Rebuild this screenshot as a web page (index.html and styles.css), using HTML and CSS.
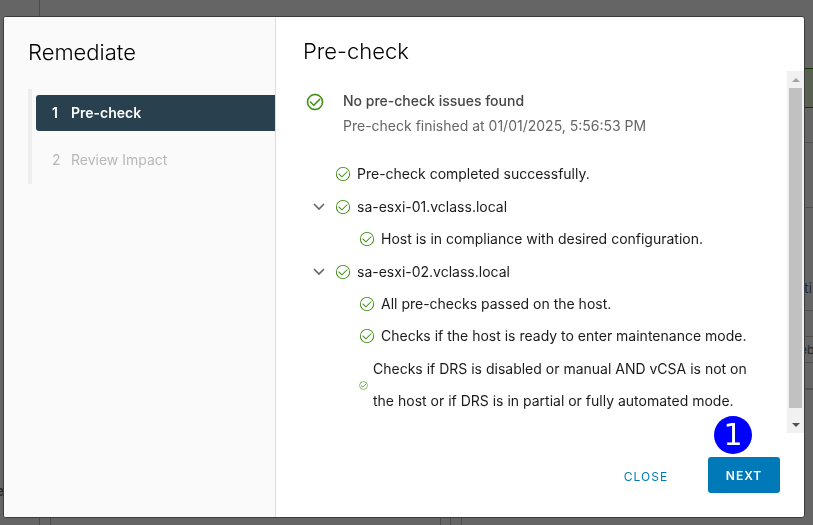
FILE: index.html
```html
<!DOCTYPE html>
<html lang="en">
<head>
<meta charset="utf-8">
<meta name="viewport" content="width=device-width, initial-scale=1">
<title>Remediate</title>
<link rel="stylesheet" href="styles.css">
</head>
<body>
<svg class="defs" aria-hidden="true">
  <symbol id="check" viewBox="0 0 36 36">
    <path d="M18 2a16 16 0 1 0 16 16A16 16 0 0 0 18 2Zm0 30a14 14 0 1 1 14-14 14 14 0 0 1-14 14Z"/>
    <path d="M28 12.1a1 1 0 0 0-1.41 0L15.49 23.15l-6-6A1 1 0 0 0 8 18.53L15.49 26 28 13.52a1 1 0 0 0 0-1.42Z"/>
  </symbol>
  <symbol id="chevron" viewBox="0 0 12 8">
    <path d="M1 1l5 5 5-5"/>
  </symbol>
</svg>

<div class="page" aria-hidden="true">
  <div class="page-nav"><span>e</span></div>
  <div class="page-content">
    <div class="panes">
      <div class="pane"></div>
      <div class="gutter"></div>
      <div class="pane pane-wide"></div>
    </div>
  </div>
  <div class="rail">
    <div class="rail-space"></div>
    <div class="rail-banner"></div>
    <div class="rail-row"></div>
    <div class="rail-row rail-tall"></div>
    <div class="rail-row rail-title">ti</div>
    <div class="rail-row rail-cell"></div>
    <div class="rail-row rail-cell">eb</div>
    <div class="rail-row rail-cell rail-last"></div>
  </div>
</div>

<div class="dialog" role="dialog" aria-modal="true" aria-labelledby="wizard-title">
  <aside class="sidebar">
    <h1 id="wizard-title">Remediate</h1>
    <ol class="steps">
      <li><button class="step active" type="button" aria-current="step"><span>1</span>Pre-check</button></li>
      <li><button class="step" type="button" disabled><span>2</span>Review Impact</button></li>
    </ol>
  </aside>

  <main class="main">
    <h2>Pre-check</h2>
    <div class="viewport">
      <div class="scroll-content">
        <div class="summary">
          <svg class="check-large"><use href="#check"/></svg>
          <div>
            <p class="summary-title">No pre-check issues found</p>
            <p class="summary-time">Pre-check finished at 01/01/2025, 5:56:53 PM</p>
          </div>
        </div>
        <ul class="tree">
          <li class="node"><svg class="check"><use href="#check"/></svg><span>Pre-check completed successfully.</span></li>
          <li>
            <div class="node parent"><button class="toggle" type="button" aria-label="Collapse sa-esxi-01"><svg><use href="#chevron"/></svg></button><svg class="check"><use href="#check"/></svg><span>sa-esxi-01.vclass.local</span></div>
            <ul class="children">
              <li class="node"><svg class="check"><use href="#check"/></svg><span>Host is in compliance with desired configuration.</span></li>
            </ul>
          </li>
          <li>
            <div class="node parent"><button class="toggle" type="button" aria-label="Collapse sa-esxi-02"><svg><use href="#chevron"/></svg></button><svg class="check"><use href="#check"/></svg><span>sa-esxi-02.vclass.local</span></div>
            <ul class="children">
              <li class="node"><svg class="check"><use href="#check"/></svg><span>All pre-checks passed on the host.</span></li>
              <li class="node"><svg class="check"><use href="#check"/></svg><span>Checks if the host is ready to enter maintenance mode.</span></li>
              <li class="node long"><svg class="check check-small"><use href="#check"/></svg><span>Checks if DRS is disabled or manual AND vCSA is not on<br>the host or if DRS is in partial or fully automated mode.</span></li>
            </ul>
          </li>
        </ul>
      </div>
      <div class="scrollbar" aria-hidden="true">
        <div class="arrow up"></div>
        <div class="thumb"></div>
        <div class="arrow down"></div>
      </div>
    </div>
    <footer class="actions">
      <button class="btn btn-link" type="button">CLOSE</button>
      <div class="next-wrap">
        <button class="btn btn-primary" type="button">NEXT</button>
        <span class="callout">1</span>
      </div>
    </footer>
  </main>
</div>
</body>
</html>
```
FILE: styles.css
```css
* { box-sizing: border-box; }

body {
  margin: 0;
  height: 100vh;
  overflow: hidden;
  background: #656565;
  color: #1b1b1b;
  font-family: Inter, "Open Sans", sans-serif;
  font-size: 14px;
}

h1, h2, p, ul, ol { margin: 0; padding: 0; }
ul, ol { list-style: none; }
button { font: inherit; border: 0; background: none; padding: 0; }
.defs { position: absolute; width: 0; height: 0; }

/* Dimmed page behind the dialog */
.page { display: flex; height: 100%; color: #262b2e; }
.page-nav {
  display: flex;
  align-items: flex-end;
  width: 40px;
  padding-bottom: 26px;
  border-right: 1px solid #4b4b4b;
  font-weight: 600;
}
.page-nav span { margin-left: -4px; }
.page-content { display: flex; flex: 1; flex-direction: column; justify-content: flex-end; padding-left: 10px; }
.panes { display: flex; height: 60px; }
.pane { flex: 0 0 391px; border: solid #4b4b4b; border-width: 0 1px; }
.gutter { width: 10px; border-right: 1px solid #4b4b4b; }
.pane-wide { flex: 1; margin-left: 10px; border-right: 0; }
.rail { width: 13px; }
.rail-space { height: 68px; }
.rail-banner { height: 40px; background: #586052; border: solid #153400; border-width: 1px 0; }
.rail-row { height: 35px; border-bottom: 1px solid #515151; overflow: hidden; }
.rail-tall { height: 65px; }
.rail-title { height: 103px; padding: 71px 0 0 4px; }
.rail-cell { height: 26px; font-size: 12px; line-height: 26px; }
.rail-last { border-bottom-width: 2px; height: 27px; }

/* Dialog */
.dialog {
  position: fixed;
  inset: 16px 8px 7px 3px;
  display: grid;
  grid-template-columns: 272px 1fr;
  overflow: hidden;
  border: 1px solid #3c3c3c;
  border-radius: 3px;
  background: #fff;
}
.sidebar { padding: 20px 0 0 24px; background: #fafafa; border-right: 1px solid #ddd; }
h1, h2 { font-size: 22px; line-height: 30px; font-weight: 300; color: #000; }
.steps { margin-top: 22px; border-left: 4px solid #eee; padding: 6px 0 6px 4px; }
.steps li + li { margin-top: 11px; }
.step {
  display: flex;
  align-items: center;
  width: 100%;
  height: 36px;
  padding: 0 0 2px 16px;
  border-radius: 3px 0 0 3px;
  color: #b8b8b8;
}
.step span { width: 19px; text-align: left; }
.step.active { background: #29414e; color: #fff; font-weight: 600; }

.main { display: flex; flex-direction: column; min-width: 0; }
.main h2 { padding: 19px 0 5px 27px; }
.viewport { display: flex; flex: 1; min-height: 0; }
.scroll-content { flex: 1; min-width: 0; }
.summary { display: flex; gap: 19px; padding: 17px 0 0 30px; }
.summary-title { font-weight: 500; line-height: 25px; color: #454545; }
.summary-time { line-height: 25px; color: #666; }
svg { fill: #318700; flex: none; }
.check-large { width: 18px; height: 18px; margin-top: 5px; stroke: #318700; stroke-width: 1; }
.tree { padding: 20px 0 0 30px; }
.node { display: flex; align-items: center; gap: 6px; min-height: 32px; padding-left: 29px; line-height: 32px; }
.parent { min-height: 33px; padding-left: 5px; }
.toggle { width: 18px; height: 16px; }
.toggle svg { display: block; width: 12px; height: 8px; margin: 0 2px; fill: none; stroke: #666; stroke-width: 1.6; }
.check { width: 16px; height: 16px; }
.children { padding-left: 24px; }
.check-small { width: 9px; height: 9px; }
.long { gap: 5px; padding-top: 1px; }

.scrollbar { display: flex; flex-direction: column; width: 17px; background: #f1f1f1; }
.arrow { display: flex; align-items: center; justify-content: center; height: 17px; }
.arrow::before { content: ""; border: 4px solid transparent; }
.up::before { border-top: 0; border-bottom-color: #a3a3a3; }
.down::before { border-bottom: 0; border-top-color: #505050; }
.thumb { flex: 0 0 320px; margin: 0 2px; background: #c1c1c1; }
.down { margin-top: auto; }

.actions { display: flex; justify-content: flex-end; gap: 20px; padding: 24px 24px 24px 0; }
.btn { height: 36px; border-radius: 3px; font-size: 12px; letter-spacing: 1px; }
.btn-link { width: 84px; padding-top: 3px; color: #0079b8; }
.btn-primary { width: 72px; background: #0079b8; color: #fff; font-weight: 600; }
.next-wrap { position: relative; }
.callout {
  position: absolute;
  top: -41px;
  left: 6px;
  width: 38px;
  height: 38px;
  border-radius: 50%;
  background: #00f;
  color: #fff;
  font: 30px/38px "DejaVu Sans", sans-serif;
  text-align: center;
}
```
